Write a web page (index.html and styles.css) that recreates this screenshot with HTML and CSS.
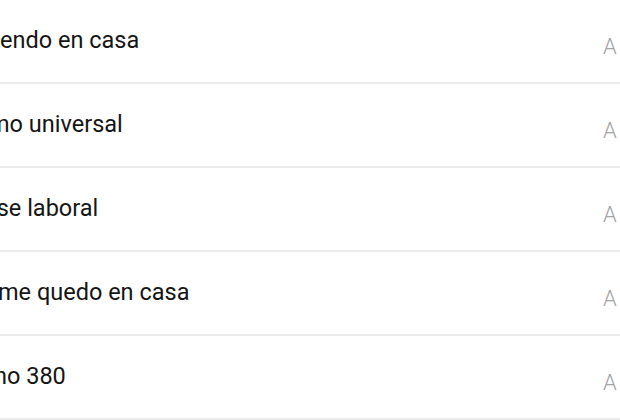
FILE: index.html
```html
<!DOCTYPE html>
<html lang="es">
<head>
    <meta charset="UTF-8">
    <meta name="viewport" content="width=device-width, initial-scale=1.0">
    <title>Temas</title>
    <link rel="stylesheet" href="styles.css">
</head>
<body>
    <ul class="topic-list">
        <li class="topic-item">
            <span class="topic-name cut-1">endo en casa</span>
            <span class="topic-tag">A</span>
        </li>
        <li class="topic-item">
            <span class="topic-name cut-2">mo universal</span>
            <span class="topic-tag">A</span>
        </li>
        <li class="topic-item">
            <span class="topic-name cut-3">ise laboral</span>
            <span class="topic-tag">A</span>
        </li>
        <li class="topic-item">
            <span class="topic-name cut-4">me quedo en casa</span>
            <span class="topic-tag">A</span>
        </li>
        <li class="topic-item">
            <span class="topic-name cut-5">no 380</span>
            <span class="topic-tag">A</span>
        </li>
    </ul>
</body>
</html>
```

FILE: styles.css
```css
html, body {
    margin: 0;
    padding: 0;
    background: #fff;
    overflow: hidden;
}
body {
    font-family: Roboto, "Noto Sans", Arial, sans-serif;
    width: 620px;
}
.topic-list {
    list-style: none;
    margin: 0;
    padding: 0;
}
.topic-item {
    display: flex;
    justify-content: space-between;
    align-items: center;
    height: 82px;
    border-bottom: 2px solid #ebebeb;
}
.topic-name {
    font-size: 23.5px;
    color: #151515;
    white-space: nowrap;
    padding-bottom: 2px;
}
.topic-tag {
    font-size: 22px;
    font-weight: 300;
    color: #a3a3a3;
    width: 17px;
    padding-top: 10px;
}
.cut-1 { margin-left: 0; }
.cut-2 { margin-left: -11px; }
.cut-3 { margin-left: -9px; }
.cut-4 { margin-left: -2px; }
.cut-5 { margin-left: -6px; }
```
